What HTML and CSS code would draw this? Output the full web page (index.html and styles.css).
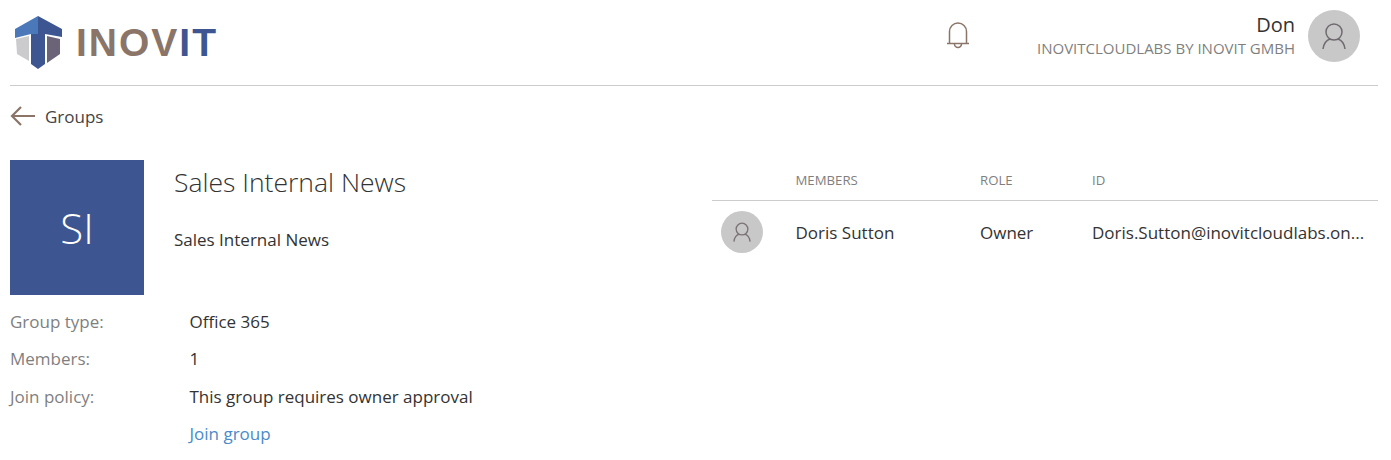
FILE: index.html
```html
<!DOCTYPE html>
<html lang="en">
<head>
    <meta charset="UTF-8">
    <title>Sales Internal News</title>
    <link rel="stylesheet" href="styles.css">
</head>
<body>
    <header class="topbar">
        <div class="logo">
            <svg class="logo-mark" width="49" height="56" viewBox="14 14 49 56">
                <polygon points="38,15 15,28 15,37 31,33 38,33" fill="#4a78b8"/>
                <polygon points="38,15 62,28 62,36 45,33 38,33" fill="#3d5591"/>
                <polygon points="16,38 29,35 29,60 17,53" fill="#cbcbcd"/>
                <polygon points="31,33 45,33 45,63 38,68 31,63" fill="#3d5591"/>
                <polygon points="47,35 60,38 60,53 47,62" fill="#6b6478"/>
            </svg>
            <span class="logo-text">INOV<span class="logo-accent">IT</span></span>
        </div>
        <div class="bell">
            <svg width="24" height="28" viewBox="0 0 24 28" fill="none" stroke="#8a7568" stroke-width="1.5">
                <path d="M3.5 21V9.5a8.5 8.5 0 0 1 17 0V21"/>
                <path d="M1 21.5h22"/>
                <path d="M8.5 22a3.5 3.5 0 0 0 7 0"/>
            </svg>
        </div>
        <div class="user">
            <div class="user-name">Don</div>
            <div class="user-org">INOVITCLOUDLABS BY INOVIT GMBH</div>
        </div>
        <div class="avatar avatar-big">
            <svg width="30" height="30" viewBox="0 0 30 30" fill="none" stroke="#6f6a70" stroke-width="1.5">
                <circle cx="15" cy="11" r="8"/>
                <path d="M4 28c1-7 4-9 7-10M26 28c-1-7-4-9-7-10"/>
            </svg>
        </div>
    </header>

    <a class="back" href="#">
        <svg width="26" height="22" viewBox="0 0 26 22" fill="none" stroke="#8a7568" stroke-width="2.2">
            <path d="M25 11H1.5M11 2l-9 9 9 9"/>
        </svg>
        <span>Groups</span>
    </a>

    <main class="content">
        <section class="details">
            <div class="group-head">
                <div class="tile">SI</div>
                <div class="group-title">
                    <h1>Sales Internal News</h1>
                    <p>Sales Internal News</p>
                </div>
            </div>
            <div class="props">
                <div class="prop-label">Group type:</div>
                <div>Office 365</div>
                <div class="prop-label">Members:</div>
                <div>1</div>
                <div class="prop-label">Join policy:</div>
                <div>This group requires owner approval</div>
                <div></div>
                <div><a class="join" href="#">Join group</a></div>
            </div>
        </section>

        <section class="members">
            <div class="row row-head">
                <div></div>
                <div>MEMBERS</div>
                <div>ROLE</div>
                <div>ID</div>
            </div>
            <div class="row row-member">
                <div class="avatar avatar-small">
                    <svg width="22" height="24" viewBox="0 0 30 30" fill="none" stroke="#7a7274" stroke-width="1.8">
                        <circle cx="15" cy="11" r="8"/>
                        <path d="M4 28c1-7 4-9 7-10M26 28c-1-7-4-9-7-10"/>
                    </svg>
                </div>
                <div>Doris Sutton</div>
                <div>Owner</div>
                <div>Doris.Sutton@inovitcloudlabs.on...</div>
            </div>
        </section>
    </main>
</body>
</html>
```

FILE: styles.css
```css
body {
    margin: 0;
    padding: 0 13px 0 10px;
    font-family: 'Open Sans', 'Noto Sans', sans-serif;
    font-size: 17px;
    color: #333;
    background-color: white;
    overflow: hidden;
}

.topbar {
    display: flex;
    align-items: center;
    height: 85px;
    border-bottom: 1px solid #ccc;
}

.logo {
    display: flex;
    align-items: center;
    gap: 13px;
    margin: 0 auto 0 4px;
}

.logo-text {
    font-family: 'Liberation Sans', sans-serif;
    font-weight: bold;
    font-size: 39px;
    letter-spacing: 2px;
    color: #8a7568;
}

.logo-accent {
    color: #3d5591;
}

.bell {
    display: flex;
    margin-right: 67px;
    padding-bottom: 13px;
}

.user {
    text-align: right;
    margin-right: 13px;
    padding-bottom: 13px;
}

.user-name {
    font-size: 20px;
    line-height: 24px;
    color: #333;
}

.user-org {
    font-size: 15px;
    line-height: 22px;
    color: #7f7f7f;
}

.avatar {
    display: flex;
    align-items: center;
    justify-content: center;
    border-radius: 50%;
    background-color: #c8c8c8;
}

.avatar-big {
    width: 52px;
    height: 52px;
    margin-right: 18px;
    margin-bottom: 14px;
}

.avatar-small {
    width: 42px;
    height: 42px;
}

.back {
    display: flex;
    align-items: center;
    gap: 9px;
    height: 60px;
    color: #444;
    text-decoration: none;
}

.content {
    display: flex;
    margin-top: 14px;
}

.details {
    width: 702px;
    flex: none;
}

.group-head {
    display: flex;
    gap: 30px;
}

.tile {
    display: flex;
    align-items: center;
    justify-content: center;
    width: 134px;
    height: 135px;
    background-color: #3d5591;
    color: white;
    font-size: 42px;
    font-weight: 300;
}

.group-title h1 {
    margin: 1px 0 0;
    font-size: 26.5px;
    line-height: 42px;
    font-weight: 300;
    color: #333;
}

.group-title p {
    margin: 26px 0 0;
    line-height: 22px;
    color: #333;
}

.props {
    display: grid;
    grid-template-columns: 179.5px 1fr;
    grid-auto-rows: 37.5px;
    align-items: center;
    margin-top: 7.5px;
}

.prop-label {
    color: #7f7f7f;
}

.join {
    color: #4a8bc9;
    text-decoration: none;
}

.members {
    flex: 1;
    min-width: 0;
}

.row {
    display: grid;
    grid-template-columns: 83.5px 184.5px 112px minmax(0, 1fr);
    align-items: center;
    padding-right: 12px;
}

.row-head {
    height: 40px;
    border-bottom: 1px solid #ccc;
    font-size: 13.2px;
    color: #7f7f7f;
}

.row-member {
    height: 62px;
}

.row-member .avatar {
    margin-left: 9px;
}
```
